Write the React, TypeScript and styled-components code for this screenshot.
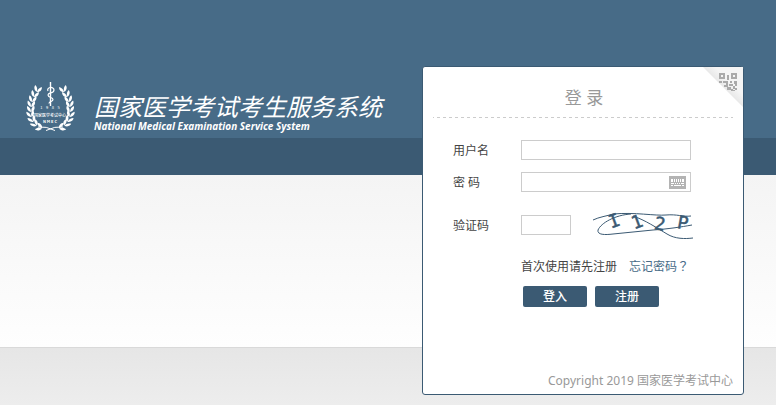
import React from "react";
import styled, { createGlobalStyle } from "styled-components";

const navy = "#3b5a73";

const GlobalStyle = createGlobalStyle`
  * { box-sizing: border-box; }
  body {
    margin: 0;
    color: #444;
    font: 12px/20px "Noto Sans", "Noto Sans CJK SC", sans-serif;
  }
`;

const Page = styled.div`
  display: grid;
  grid-template-columns: minmax(0, 1fr) 322px 32px;
  grid-template-rows: 138px 37px 172px minmax(58px, 1fr);
  min-height: 100vh;
`;

const Band = styled.div<{ $row: number; $fill: string; $line?: string }>`
  grid-column: 1 / -1;
  grid-row: ${(p) => p.$row};
  background: ${(p) => p.$fill};
  border-top: ${(p) => (p.$line ? `1px solid ${p.$line}` : "0")};
`;

const Brand = styled.header`
  grid-column: 1;
  grid-row: 1;
  align-self: end;
  display: flex;
  align-items: flex-end;
  gap: 18px;
  padding: 0 0 5px 26px;
  color: #fff;
`;

const BrandText = styled.div`
  padding-bottom: 1px;
  font-style: italic;
  white-space: nowrap;
`;

const BrandName = styled.h1`
  margin: 0;
  font: italic 400 24px/28px "Noto Sans CJK SC", sans-serif;
`;

const BrandSub = styled.p`
  margin: 0;
  font: italic 700 10px/12px "Open Sans", sans-serif;
`;

const Card = styled.main`
  grid-column: 2;
  grid-row: 1 / -1;
  align-self: start;
  position: relative;
  margin: 66px 0 10px;
  padding: 0 10px;
  background: #fff;
  border: 1px solid ${navy};
  border-radius: 3px;
`;

const Corner = styled.button`
  position: absolute;
  top: 0;
  right: 0;
  padding: 0;
  border: 0;
  background: none;
  line-height: 0;
`;

const CardTitle = styled.h2`
  margin: 0;
  padding: 17px 0 5px 2px;
  font-size: 17px;
  line-height: 28px;
  font-weight: 400;
  text-align: center;
  color: #999;
`;

const Divider = styled.div`
  height: 1px;
  background: repeating-linear-gradient(
    to right,
    #ccc 0 1px,
    transparent 1px 4px,
    #ccc 4px 6px
  );
`;

const Form = styled.form`
  padding: 22px 20px 0;
`;

const Row = styled.div<{ $gap: number }>`
  display: grid;
  grid-template-columns: 68px 1fr;
  align-items: center;
  margin-bottom: ${(p) => p.$gap}px;
`;

const Label = styled.label`
  padding-top: 2px;
  line-height: 18px;
`;

const Field = styled.div`
  display: flex;
  align-items: center;
  position: relative;
`;

const TextBox = styled.input<{ $width: number }>`
  width: ${(p) => p.$width}px;
  height: 20px;
  padding: 0 4px;
  border: 1px solid #ccc;
  background: #fff;
  font: inherit;
`;

const KeyboardButton = styled.button`
  position: absolute;
  left: 148px;
  top: 4px;
  padding: 0;
  border: 0;
  background: none;
  line-height: 0;
`;

const CaptchaButton = styled.button`
  margin-left: 22px;
  padding: 0;
  border: 0;
  background: none;
  line-height: 0;
`;

const Help = styled.div`
  display: flex;
  gap: 12px;
  padding: 0 0 10px 68px;
  font-family: "Noto Sans CJK SC", sans-serif;
  white-space: nowrap;
`;

const HelpLink = styled.a`
  color: #476b87;
  font-family: "Noto Sans CJK TC", sans-serif;
  text-decoration: none;
`;

const Actions = styled.div`
  display: flex;
  gap: 8px;
  padding-left: 70px;
`;

const Action = styled.button`
  width: 64px;
  height: 21px;
  padding: 0;
  border: 0;
  border-radius: 2px;
  background: ${navy};
  color: #fff;
  font: inherit;
  font-weight: 500;
  line-height: 20px;
`;

const Copyright = styled.footer`
  padding: 64px 0 3px;
  text-align: right;
  color: #999;
`;

const leafPairs: [number, number, number][] = [
  [11, 10, 22], [8, 15, 22], [6, 20, 16], [5, 25, 8], [5, 30, 0],
  [5, 35, -10], [7, 40, -25], [10, 44, -42], [15, 47, -65],
];

const Branch = () => (
  <g>
    <path d="M12 46Q20 45 29 49.500" fill="none" stroke="#fff" strokeWidth="1" />
    {leafPairs.map(([x, y, r]) => (
      <g key={y} transform={`translate(${x} ${y}) rotate(${r})`}>
        <path d="M0 1C-3.500 0-4.500-3-3.800-5C-1.500-4 0-2 0 1Z" />
        <path d="M0.300 1C0-2 1-4 3-5.500C4.300-3 3.500 0 0.300 1Z" />
      </g>
    ))}
  </g>
);

const Emblem = () => (
  <svg width="50" height="52" viewBox="0 0 50 52" fill="#fff" aria-hidden="true">
    <Branch />
    <g transform="matrix(-1 0 0 1 49 0)"><Branch /></g>
    <path d="M24.500 1V25" stroke="#fff" strokeWidth="1.400" />
    <path
      d="M22 10C20 6 28 5 28 9S22 11 22 14S27 16 27 18.500S23 20 23 22.500"
      fill="none" stroke="#fff" strokeWidth="1.200"
    />
    <g fontFamily="Noto Sans CJK SC, sans-serif" textAnchor="middle">
      <text x="24" y="28" fontSize="4">{"1\u00a0\u00a0\u00a0 9\u00a0\u00a0\u00a0 8\u00a0\u00a0\u00a0 5"}</text>
      <text x="24" y="36" fontSize="4" fontWeight="500">国家医学考试中心</text>
      <text x="24" y="42" fontSize="4" fontWeight="700">N M E C</text>
    </g>
  </svg>
);

const QrCorner = () => (
  <svg width="40" height="40" viewBox="0 0 40 40" aria-hidden="true">
    <defs>
      <linearGradient id="fold" x1="0.5" y1="0.5" x2="0.65" y2="0.35">
        <stop offset="0" stopColor="#e8e8e8" />
        <stop offset="1" stopColor="#f5f5f5" />
      </linearGradient>
      <clipPath id="foldClip"><path d="M0 0H40V40Z" /></clipPath>
    </defs>
    <path d="M0 0H40V40Z" fill="url(#fold)" />
    <g clipPath="url(#foldClip)">
      <path
        d="M17 7H21V11H17ZM29 7H33V11H29Z" fill="none" stroke="#aaa" strokeWidth="2"
      />
      <path
        d="M24 8h2v5h-2zM16 14h3v2h-3zM20 14h5v2h-5zM27 14h2v2h-2zM31 14h3v3h-3zM23 16h2v4h-2zM26 17h4v2h-4zM21 18h2v2h-2zM30 19h2v3h-2zM32 17h2v2h-2zM24 20h4v3h-4zM28 22h2v2h-2zM32 21h2v2h-2zM30 23h2v1h-2z"
        fill="#aaa"
      />
    </g>
  </svg>
);

const KeyboardIcon = () => (
  <svg width="17" height="13" viewBox="0 0 17 13" shapeRendering="crispEdges" aria-hidden="true">
    <rect width="17" height="13" fill="#b3b3b3" />
    <path
      d="M2 3h2v3h-2zM5 3h1v3h-1zM7 3h1v3h-1zM9 3h1v3h-1zM11 3h1v3h-1zM13 3h2v3h-2zM2 7h3v1h-3zM6 7h1v1h-1zM8 7h1v1h-1zM10 7h1v1h-1zM12 7h3v1h-3zM2 9h2v1h-2zM5 9h7v1h-7zM13 9h2v1h-2z"
      fill="#fff"
    />
  </svg>
);

const Captcha = () => (
  <svg width="100" height="30" viewBox="0 0 100 30" overflow="visible" aria-hidden="true">
    <g fill="none" stroke="#3b5a73" strokeWidth="1">
      <path d="M0 10C6 7 14 6 20 4C42 2 62 6 73 5S90 7 98 6" />
      <path d="M38 4C22 5 8 13 5 20C4 25 12 25 20 24L60 20C75 19 88 17 99 15" />
      <path d="M40 6C52 10 64 18 74 24C82 29 92 29 100 28" />
    </g>
    <g
      fill="#3b5a73" stroke="#3b5a73" strokeWidth="0.5"
      fontFamily="DejaVu Sans Mono, monospace" fontSize="18" textAnchor="middle"
    >
      <text x="21" y="17" transform="rotate(-20 21 10)">I</text>
      <text x="44" y="18" transform="rotate(-20 44 12)">1</text>
      <text x="67" y="20" transform="rotate(10 67 13)">2</text>
      <text x="90" y="19" transform="rotate(10 90 13)">P</text>
    </g>
  </svg>
);

export default function App() {
  return (
    <Page lang="zh-CN">
      <GlobalStyle />
      <Band $row={1} $fill="#476b87" />
      <Band $row={2} $fill={navy} />
      <Band $row={3} $fill="linear-gradient(#f4f4f4, #fefefe)" />
      <Band $row={4} $fill="linear-gradient(#e6e6e6, #ededed)" $line="#d9d9d9" />
      <Brand>
        <Emblem />
        <BrandText>
          <BrandName>国家医学考试考生服务系统</BrandName>
          <BrandSub>National Medical Examination Service System</BrandSub>
        </BrandText>
      </Brand>
      <Card>
        <Corner type="button" aria-label="二维码登录"><QrCorner /></Corner>
        <CardTitle>登 录</CardTitle>
        <Divider />
        <Form onSubmit={(e) => e.preventDefault()}>
          <Row $gap={12}>
            <Label htmlFor="user">用户名</Label>
            <Field><TextBox id="user" $width={170} /></Field>
          </Row>
          <Row $gap={18}>
            <Label htmlFor="password">密 码</Label>
            <Field>
              <TextBox id="password" type="password" $width={170} />
              <KeyboardButton type="button" aria-label="软键盘"><KeyboardIcon /></KeyboardButton>
            </Field>
          </Row>
          <Row $gap={16}>
            <Label htmlFor="code">验证码</Label>
            <Field>
              <TextBox id="code" $width={50} />
              <CaptchaButton type="button" aria-label="换一张验证码"><Captcha /></CaptchaButton>
            </Field>
          </Row>
          <Help>
            <span>首次使用请先注册</span>
            <HelpLink href="#forgot" lang="zh-TW">忘记密码？</HelpLink>
          </Help>
          <Actions>
            <Action type="submit">登入</Action>
            <Action type="button">注册</Action>
          </Actions>
        </Form>
        <Copyright>Copyright 2019 国家医学考试中心</Copyright>
      </Card>
    </Page>
  );
}
